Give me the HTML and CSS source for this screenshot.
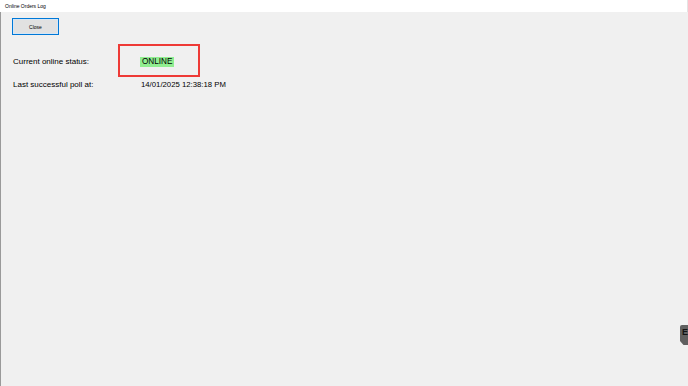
FILE: index.html
```html
<!DOCTYPE html>
<html>
<head>
<meta charset="utf-8">
<title>Online Orders Log</title>
<link rel="stylesheet" href="styles.css">
</head>
<body>
<div class="window">
  <div class="titlebar">Online Orders Log</div>
  <div class="content">
    <button class="btn">Close</button>
    <div class="row status-row">
      <span class="label">Current online status:</span>
      <div class="status-box"><span class="online">ONLINE</span></div>
    </div>
    <div class="row poll-row">
      <span class="label">Last successful poll at:</span>
      <span class="value">14/01/2025 12:38:18 PM</span>
    </div>
  </div>
  <div class="side-tab">E</div>
</div>
</body>
</html>
```
FILE: styles.css
```css
html, body {
  margin: 0;
  padding: 0;
  width: 688px;
  height: 386px;
  overflow: hidden;
  background: #f0f0f0;
  font-family: "Liberation Sans", Arial, sans-serif;
}
.window {
  position: relative;
  width: 688px;
  height: 386px;
  display: flex;
  flex-direction: column;
}
.titlebar {
  height: 12px;
  line-height: 12px;
  background: #ffffff;
  font-size: 5px;
  color: #000;
  padding-left: 5px;
  border-right: 1px solid #e4e4e4;
}
.content {
  flex: 1;
  border-left: 1px solid #9a9a9a;
  padding: 6px 0 0 11px;
  display: flex;
  flex-direction: column;
  align-items: flex-start;
}
.btn {
  width: 47px;
  height: 17px;
  margin: 0;
  padding: 0;
  border: 1px solid #0078d7;
  background: #e1e1e1;
  box-shadow: inset 0 0 0 1px #d6e6f5;
  font-family: "Liberation Sans", Arial, sans-serif;
  font-size: 5px;
  color: #000;
}
.row {
  display: flex;
  align-items: center;
  font-size: 8px;
  color: #000;
}
.label {
  width: 105px;
  padding-left: 1px;
  padding-top: 2px;
}
.status-row {
  margin-top: 9px;
  height: 33px;
}
.status-box {
  box-sizing: border-box;
  width: 82px;
  height: 33px;
  border: 2px solid #ee3a36;
  padding: 2px 0 0 20px;
  display: flex;
  align-items: center;
}
.online {
  display: inline-block;
  background: #90ee90;
  height: 10px;
  line-height: 10px;
  width: 34px;
  padding-left: 2px;
  box-sizing: border-box;
  font-size: 8.2px;
}
.poll-row {
  margin-top: 1px;
  height: 11px;
  line-height: 10px;
}
.value {
  padding-left: 23px;
  padding-top: 2px;
  font-size: 7.75px;
}
.side-tab {
  position: absolute;
  left: 680px;
  top: 325px;
  width: 10px;
  height: 20px;
  background: #5f5f5f;
  border-radius: 2px 0 0 0;
  clip-path: polygon(0 0, 100% 0, 100% 100%, 35% 100%, 0 80%);
  color: #111;
  font-size: 9px;
  font-weight: bold;
  line-height: 14px;
  padding-left: 2px;
  box-sizing: border-box;
}
```
